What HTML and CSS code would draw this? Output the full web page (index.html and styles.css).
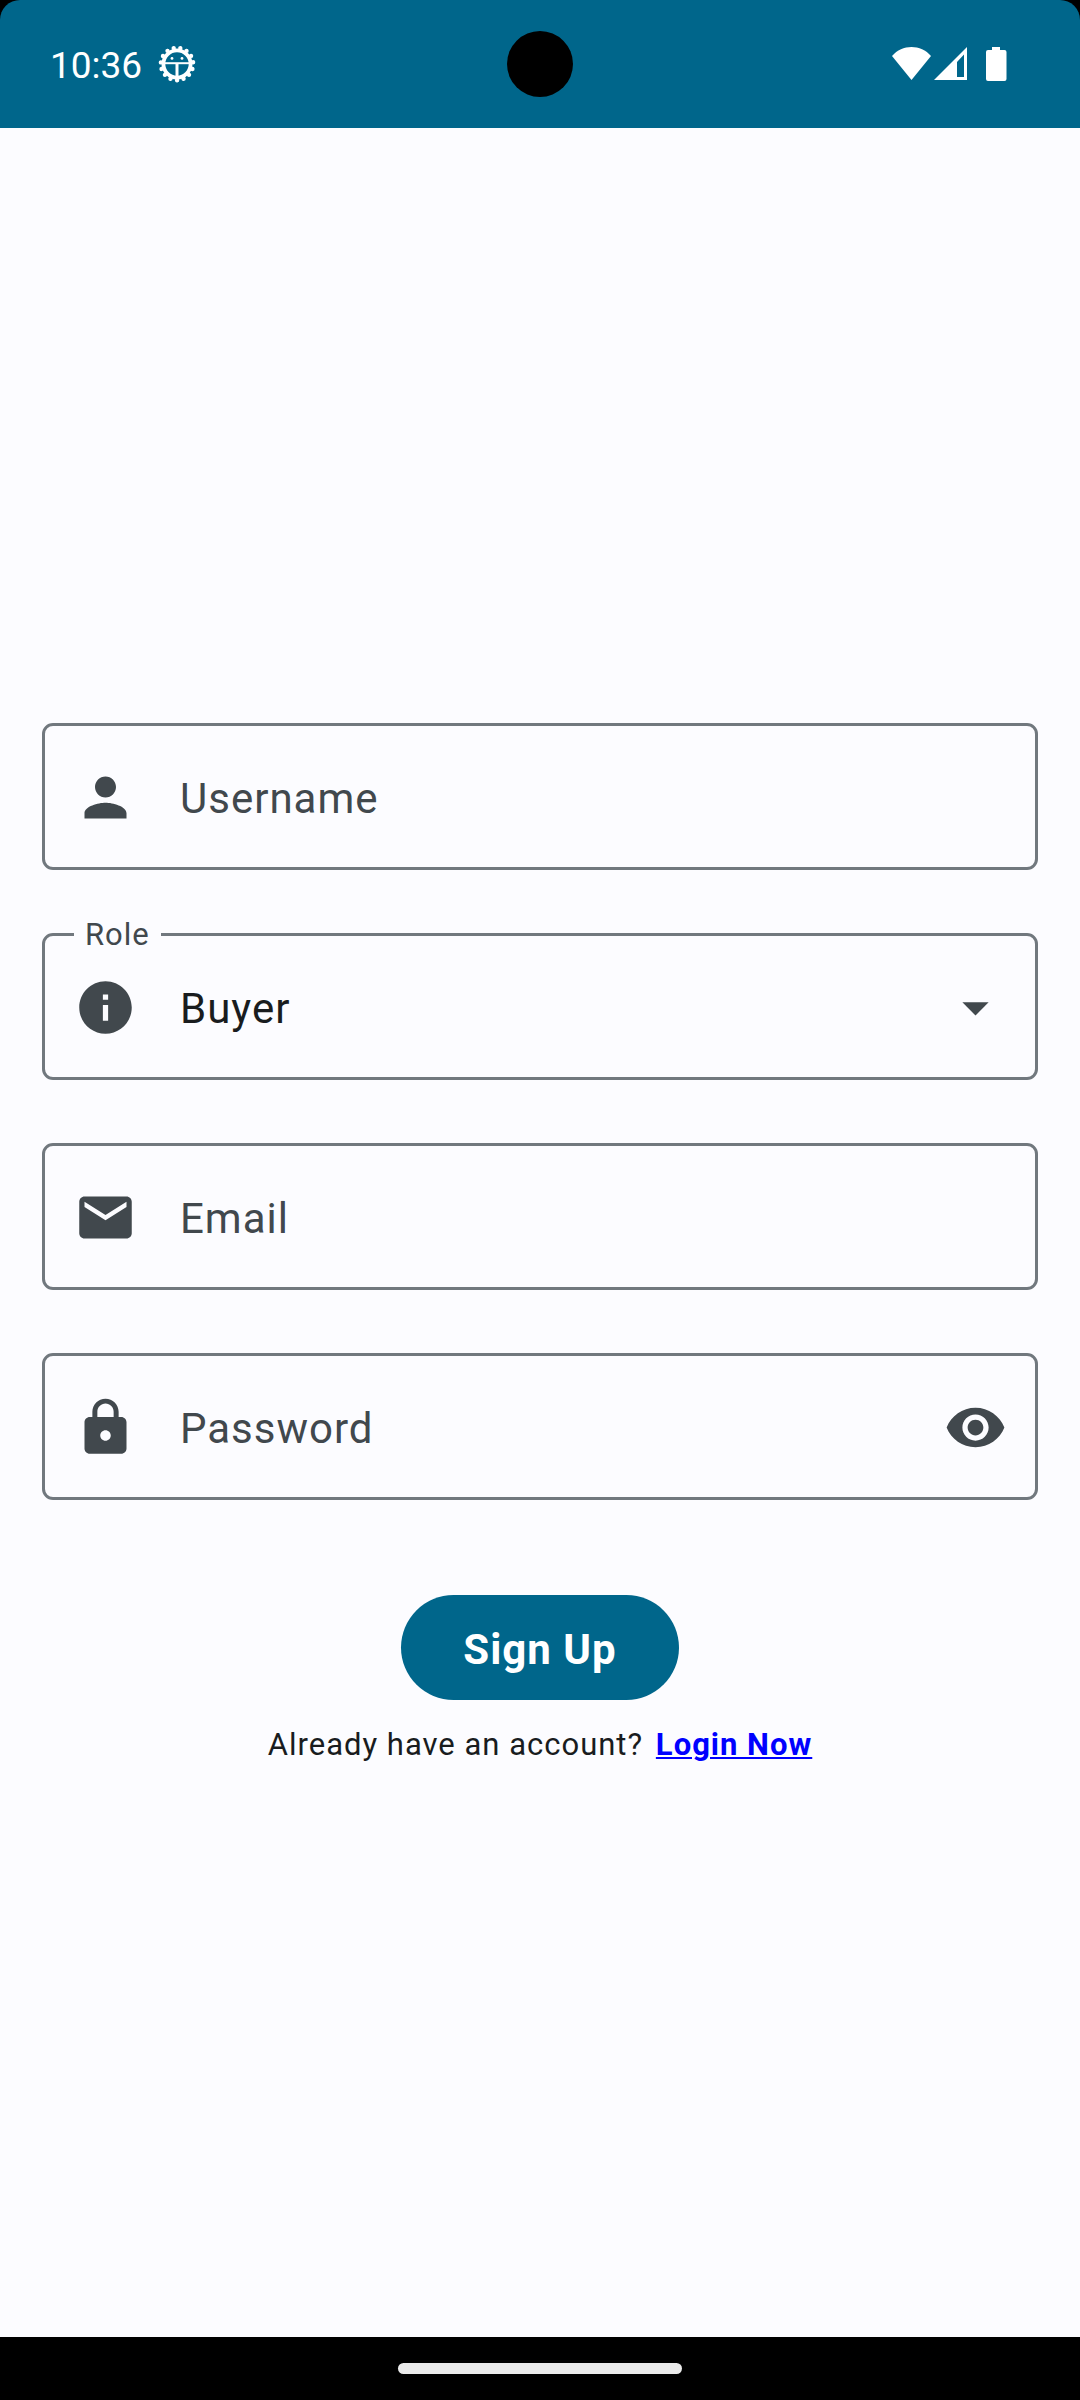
FILE: index.html
```html
<!DOCTYPE html>
<html lang="en">
<head>
  <meta charset="utf-8">
  <meta name="viewport" content="width=device-width, initial-scale=1">
  <title>Sign Up</title>
  <link rel="stylesheet" href="styles.css">
</head>
<body>
  <header class="status-bar">
    <div class="status-group">
      <time class="clock">10:36</time>
      <svg class="bug-icon" viewBox="-20 -20 40 40" aria-hidden="true">
        <g fill="none" stroke="currentColor">
          <circle r="16.2" stroke-width="4.4" stroke-linecap="round" pathLength="30" stroke-dasharray="0 2" transform="rotate(-6)"/>
          <circle r="13.6" stroke-width="3.8"/>
          <path d="M-12-.8H12" stroke-width="2"/>
          <path d="M0-.8V13" stroke-width="3"/>
        </g>
        <circle cx="-5" cy="-5.6" r="1.4" fill="currentColor"/>
        <circle cx="5" cy="-5.6" r="1.4" fill="currentColor"/>
      </svg>
    </div>
    <div class="camera"></div>
    <div class="status-group status-right">
      <svg class="signals" viewBox="0 0 115 34" aria-hidden="true" fill="currentColor">
        <path d="M0 9C10-3 29-3 39 9L19.500 33Z"/>
        <path fill-rule="evenodd" d="M42 33L75 0V33ZM65 15V30H72V7.500Z"/>
        <path d="M100 0H108V3H112.500Q114.500 3 114.500 5V32Q114.500 34 112.500 34H96Q94 34 94 32V5Q94 3 96 3H100Z"/>
      </svg>
    </div>
  </header>

  <main class="content">
    <form class="form">
      <div class="field">
        <svg class="icon" viewBox="0 0 24 24" aria-hidden="true"><path d="M12 12c2.210 0 4-1.790 4-4s-1.790-4-4-4-4 1.790-4 4 1.790 4 4 4zm0 2c-2.670 0-8 1.340-8 4v2h16v-2c0-2.660-5.330-4-8-4z"/></svg>
        <div class="entry">
          <input class="control" id="username" type="text" placeholder=" ">
          <label class="label" for="username">Username</label>
        </div>
      </div>

      <div class="field">
        <label class="outline-label" for="role">Role</label>
        <svg class="icon" viewBox="0 0 24 24" aria-hidden="true"><path d="M12 2C6.480 2 2 6.480 2 12s4.480 10 10 10 10-4.480 10-10S17.520 2 12 2zm1 15h-2v-6h2v6zm0-8h-2V7h2v2z"/></svg>
        <div class="entry">
          <select class="control" id="role">
            <option>Buyer</option>
          </select>
        </div>
        <svg class="icon" viewBox="0 0 24 24" aria-hidden="true"><path d="M7 10l5 5 5-5z"/></svg>
      </div>

      <div class="field">
        <svg class="icon" viewBox="0 0 24 24" aria-hidden="true"><path d="M20 4H4c-1.100 0-1.990.9-1.990 2L2 18c0 1.100.9 2 2 2h16c1.100 0 2-.9 2-2V6c0-1.100-.9-2-2-2zm0 4l-8 5-8-5V6l8 5 8-5v2z"/></svg>
        <div class="entry">
          <input class="control" id="email" type="email" placeholder=" ">
          <label class="label" for="email">Email</label>
        </div>
      </div>

      <div class="field">
        <svg class="icon" viewBox="0 0 24 24" aria-hidden="true"><path d="M18 8h-1V6c0-2.760-2.240-5-5-5S7 3.240 7 6v2H6c-1.100 0-2 .9-2 2v10c0 1.100.9 2 2 2h12c1.100 0 2-.9 2-2V10c0-1.100-.9-2-2-2zm-6 9c-1.100 0-2-.9-2-2s.9-2 2-2 2 .9 2 2-.9 2-2 2zm3.100-9H8.900V6c0-1.710 1.390-3.100 3.100-3.100 1.710 0 3.100 1.390 3.100 3.100v2z"/></svg>
        <div class="entry">
          <input class="control" id="password" type="password" placeholder=" ">
          <label class="label" for="password">Password</label>
        </div>
        <button class="icon-button" type="button" aria-label="Show password">
          <svg class="icon" viewBox="0 0 24 24" aria-hidden="true"><path d="M12 4.500C7 4.500 2.730 7.610 1 12c1.730 4.390 6 7.500 11 7.500s9.270-3.110 11-7.500c-1.730-4.390-6-7.500-11-7.500zM12 17c-2.760 0-5-2.240-5-5s2.240-5 5-5 5 2.240 5 5-2.240 5-5 5zm0-8c-1.660 0-3 1.340-3 3s1.340 3 3 3 3-1.340 3-3-1.340-3-3-3z"/></svg>
        </button>
      </div>

      <button class="submit" type="submit">Sign Up</button>
    </form>

    <p class="login">Already have an account? <a class="login-link" href="#login">Login Now</a></p>
  </main>

  <footer class="nav-bar"><div class="nav-handle"></div></footer>
</body>
</html>
```
FILE: styles.css
```css
:root {
  --primary: #00668b;
  --surface: #fcfcff;
  --outline: #71787e;
  --muted: #41484d;
  --text: #191c1e;
}

* {
  box-sizing: border-box;
}

body {
  margin: 0;
  min-height: 100vh;
  display: flex;
  flex-direction: column;
  background: #000;
  color: var(--text);
  font-family: Roboto, "Liberation Sans", sans-serif;
  letter-spacing: 1px;
}

.status-bar {
  height: 128px;
  padding: 0 73px 0 50px;
  display: grid;
  grid-template-columns: 1fr 66px 1fr;
  align-items: center;
  border-radius: 20px 20px 0 0;
  background: var(--primary);
  color: #fff;
  position: relative;
}

.status-group {
  display: flex;
  align-items: center;
  gap: 15px;
}

.status-right {
  grid-column: 3;
  justify-content: flex-end;
}

.clock {
  padding-top: 4px;
  font-size: 37px;
  line-height: 44px;
  letter-spacing: 0;
}

.bug-icon {
  width: 40px;
  height: 40px;
}

/* Camera cutout, over the middle of the bar */
.camera {
  position: absolute;
  left: 50%;
  top: 50%;
  width: 66px;
  height: 66px;
  border-radius: 50%;
  background: #000;
  transform: translate(-50%, -50%);
}

.signals {
  width: 115px;
  height: 34px;
}

.content {
  flex: 1;
  padding: 24px 42px 0;
  display: flex;
  flex-direction: column;
  justify-content: center;
  background: var(--surface);
}

.form {
  display: flex;
  flex-direction: column;
  gap: 63px;
}

.field {
  position: relative;
  height: 147px;
  padding: 2px 28px 0 29px;
  display: flex;
  align-items: center;
  gap: 43px;
  border: 3px solid var(--outline);
  border-radius: 11px;
}

.icon {
  display: block;
  flex: none;
  width: 63px;
  height: 63px;
  fill: var(--muted);
}

.entry {
  flex: 1;
  min-width: 0;
  height: 100%;
  padding-top: 2px;
  display: grid;
  align-items: center;
}

.control,
.label {
  grid-area: 1 / 1;
  font-size: 42px;
  line-height: 63px;
}

.control {
  width: 100%;
  height: 100%;
  padding: 0;
  border: 0;
  outline: 0;
  appearance: none;
  background: transparent;
  color: var(--text);
  font-family: inherit;
  letter-spacing: inherit;
}

.label {
  color: var(--muted);
  pointer-events: none;
}

.control:not(:placeholder-shown) + .label {
  visibility: hidden;
}

/* Label that sits in the outline of the field */
.outline-label {
  position: absolute;
  left: 29px;
  top: -22px;
  padding: 0 11px;
  background: var(--surface);
  color: var(--muted);
  font-size: 31px;
  line-height: 42px;
}

.icon-button {
  padding: 0;
  border: 0;
  background: none;
}

.submit {
  align-self: center;
  height: 105px;
  margin-top: 32px;
  padding: 4px 62px 0;
  border: 0;
  border-radius: 53px;
  background: var(--primary);
  color: #fff;
  font-family: inherit;
  font-size: 42px;
  font-weight: 700;
  line-height: 63px;
  letter-spacing: inherit;
}

.login {
  margin: 23px 0 0;
  text-align: center;
  font-size: 31px;
  line-height: 43px;
}

.login-link {
  margin-left: 4px;
  color: #00f;
  font-weight: 700;
  text-decoration-thickness: 2px;
  text-underline-offset: 2px;
}

.nav-bar {
  height: 63px;
  display: flex;
  align-items: center;
  justify-content: center;
  background: #000;
}

.nav-handle {
  width: 284px;
  height: 11px;
  border-radius: 6px;
  background: #ebebeb;
}
```
